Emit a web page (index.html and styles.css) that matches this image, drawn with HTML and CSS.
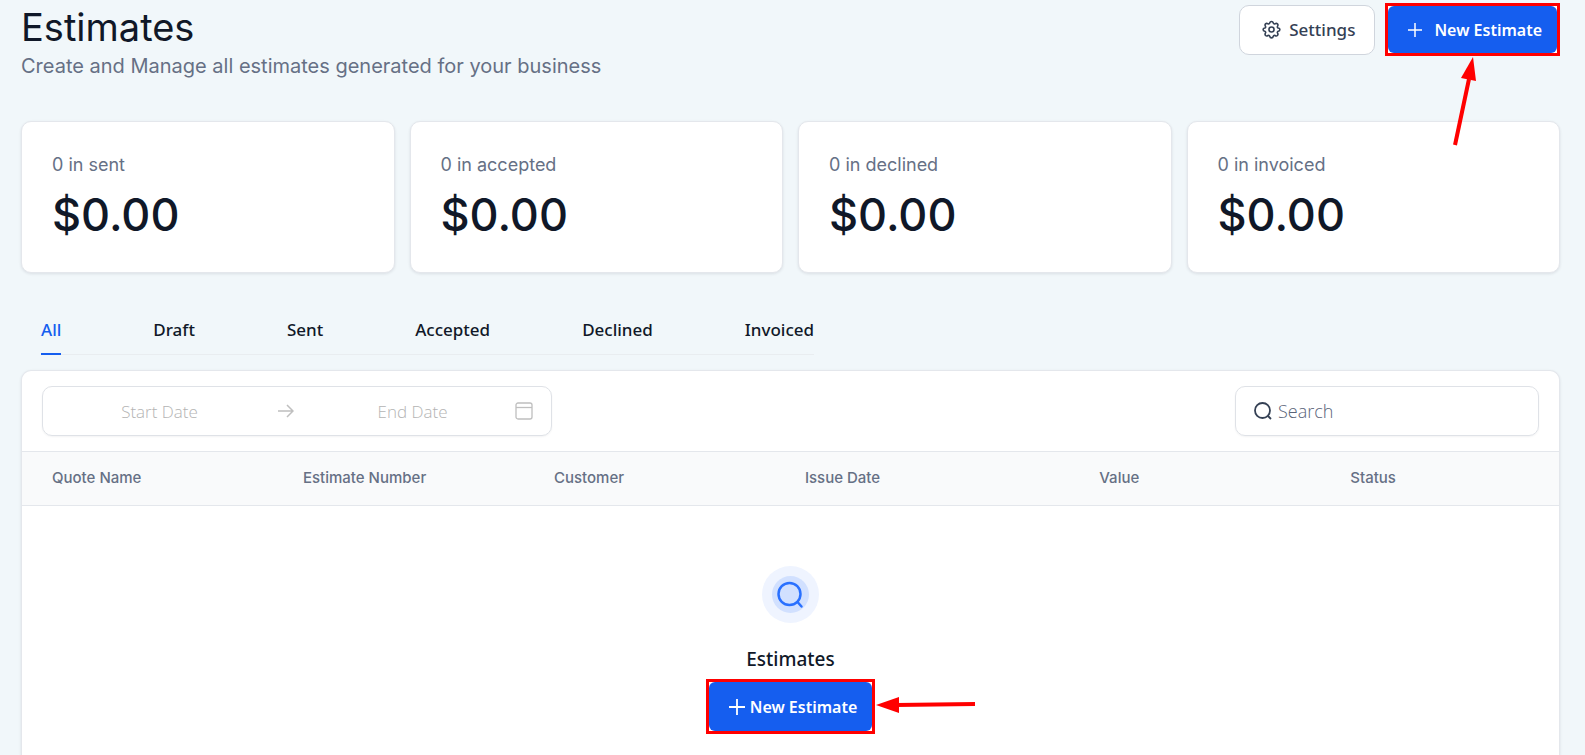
FILE: index.html
```html
<!DOCTYPE html>
<html lang="en">
<head>
	<meta charset="UTF-8">
	<meta name="viewport" content="width=device-width, initial-scale=1">
	<title>Estimates</title>
	<link rel="stylesheet" href="styles.css">
</head>
<body>
	<div class="page">
		<header class="header">
			<div>
				<h1 class="title">Estimates</h1>
				<p class="subtitle">Create and Manage all estimates generated for your business</p>
			</div>
			<div class="actions">
				<button type="button" class="btn btn-settings">
					<svg class="icon-gear" viewBox="0 0 24 24"><circle cx="12" cy="12" r="3.2"/><path d="M12 1.8c1.3 0 2 .9 2.3 2.1.3 1 1.2 1.4 2.1.9 1.1-.7 2.2-.8 3.1.1s.8 2 .1 3.1c-.5.9-.1 1.800.9 2.100 1.200.3 2.100 1 2.100 1.900 0 1.300-.9 2-2.100 2.300-1 .3-1.400 1.200-.9 2.100.7 1.100.8 2.200-.1 3.100s-2 .8-3.100.1c-.9-.5-1.800-.1-2.100.9-.3 1.200-1 2.100-2.300 2.100s-2-.9-2.300-2.100c-.3-1-1.200-1.400-2.100-.9-1.100.7-2.200.8-3.100-.1s-.8-2-.1-3.100c.5-.9.1-1.800-.9-2.100-1.200-.3-2.100-1-2.100-2.300s.9-1.600 2.100-1.900c1-.3 1.400-1.200.9-2.100-.7-1.100-.8-2.200.1-3.100s2-.8 3.100-.1c.9.5 1.800.1 2.100-.9.3-1.200 1-2.100 2.300-2.100z"/></svg>
					Settings
				</button>
				<div class="callout">
					<button type="button" class="btn btn-primary btn-top">
						<svg class="icon-plus-sm" viewBox="0 0 14 14"><path d="M7 0v14M0 7h14"/></svg>
						New Estimate
					</button>
					<svg class="arrow arrow-up" viewBox="0 0 24 90"><path class="arrow-line" d="M3 88L17 22"/><path class="arrow-head" d="M21 0L24 24L9 21z"/></svg>
				</div>
			</div>
		</header>

		<section class="cards">
			<div class="card"><p class="card-label">0 in sent</p><p class="card-value">$0.00</p></div>
			<div class="card"><p class="card-label">0 in accepted</p><p class="card-value">$0.00</p></div>
			<div class="card"><p class="card-label">0 in declined</p><p class="card-value">$0.00</p></div>
			<div class="card"><p class="card-label">0 in invoiced</p><p class="card-value">$0.00</p></div>
		</section>

		<nav class="tabs">
			<a href="#all" class="tab active">All</a>
			<a href="#draft" class="tab">Draft</a>
			<a href="#sent" class="tab">Sent</a>
			<a href="#accepted" class="tab">Accepted</a>
			<a href="#declined" class="tab">Declined</a>
			<a href="#invoiced" class="tab">Invoiced</a>
		</nav>

		<section class="panel">
			<div class="filters">
				<div class="date-range">
					<input type="text" placeholder="Start Date" aria-label="Start Date">
					<svg class="icon-range" viewBox="0 0 16 14"><path d="M0 7h15M9 1l6 6-6 6"/></svg>
					<input type="text" placeholder="End Date" aria-label="End Date">
					<svg class="icon-calendar" viewBox="0 0 18 18"><rect x="1" y="1" width="16" height="16" rx="2"/><path d="M1 5.500h16"/></svg>
				</div>
				<label class="search">
					<svg class="icon-search" viewBox="0 0 18 18"><circle cx="8.500" cy="8.500" r="7.500"/><path d="M14 14l3 3"/></svg>
					<input type="text" placeholder="Search" aria-label="Search">
				</label>
			</div>
			<table class="table">
				<thead>
					<tr>
						<th>Quote Name</th>
						<th>Estimate Number</th>
						<th>Customer</th>
						<th class="wide">Issue Date</th>
						<th>Value</th>
						<th class="last">Status</th>
					</tr>
				</thead>
			</table>
			<div class="empty">
				<div class="empty-icon">
					<svg viewBox="0 0 57 57"><circle class="halo" cx="28.500" cy="28.500" r="28.500"/><circle class="disc" cx="28.500" cy="28.500" r="18.500"/><circle class="lens" cx="27.500" cy="28" r="11"/><path class="lens" d="M35.500 36l4 4.500"/></svg>
				</div>
				<h2 class="empty-title">Estimates</h2>
				<div class="callout">
					<button type="button" class="btn btn-primary btn-empty">
						<svg class="icon-plus" viewBox="0 0 16 16"><path d="M8 0v16M0 8h16"/></svg>
						New Estimate
					</button>
					<svg class="arrow arrow-left" viewBox="0 0 100 16"><path class="arrow-line" d="M20 8L99 7"/><path class="arrow-head" d="M0 8L23 0v16z"/></svg>
				</div>
			</div>
		</section>
	</div>
</body>
</html>
```

FILE: styles.css
```css
* {
	box-sizing: border-box;
}
body {
	margin: 0;
	background: #f1f7fa;
	color: #101828;
	font-family: Inter, sans-serif;
}
h1, h2, p {
	margin: 0;
	font-weight: 400;
}
svg {
	display: block;
	flex: none;
	fill: none;
	stroke: currentColor;
}
button {
	font-family: "Noto Sans", sans-serif;
}
input {
	font-family: "Open Sans", sans-serif;
}
.page {
	display: flex;
	flex-direction: column;
	min-height: 100vh;
	padding: 3px 25px 0 21px;
}

/* header */
.header {
	display: flex;
	justify-content: space-between;
	align-items: flex-start;
}
.title {
	font-size: 38px;
	line-height: 48px;
}
.subtitle {
	font-size: 20px;
	line-height: 30px;
	color: #667085;
}
.actions {
	display: flex;
	align-items: center;
	gap: 10px;
}
.btn {
	display: flex;
	align-items: center;
	height: 50px;
	border-radius: 10px;
	font-size: 17px;
	white-space: nowrap;
}
.btn-settings {
	gap: 8px;
	padding: 0 19px 0 22px;
	border: 1px solid #d0d5dd;
	background: #fff;
	color: #344054;
	font-weight: 500;
}
.btn-primary {
	border: 0;
	border-radius: 6px;
	background: #155eef;
	color: #fff;
	font-size: 16px;
	font-weight: 600;
}
.btn-top {
	gap: 12px;
	height: 47px;
	padding: 0 15px 0 20px;
}
.btn-empty {
	gap: 5px;
	height: 49px;
	padding: 0 15px 0 20px;
}
.icon-gear {
	width: 19px;
	height: 19px;
	stroke-width: 2;
}
.icon-plus-sm {
	width: 14px;
	height: 14px;
	stroke-width: 1.5;
}
.icon-plus {
	width: 16px;
	height: 16px;
	stroke-width: 1.8;
}

/* red frame with its arrow */
.callout {
	position: relative;
	border: 3px solid #f00;
	background: #fff;
}
.arrow {
	position: absolute;
	overflow: visible;
}
.arrow-line {
	stroke: #f00;
	stroke-width: 4;
}
.arrow-head {
	fill: #f00;
	stroke: none;
}
.arrow-up {
	top: 51px;
	right: 81px;
	width: 24px;
	height: 90px;
}
.arrow-left {
	top: 15px;
	left: 100%;
	margin-left: 4px;
	width: 100px;
	height: 16px;
}

/* totals */
.cards {
	display: grid;
	grid-template-columns: repeat(4, 1fr);
	gap: 15px;
	margin-top: 40px;
}
.card {
	padding: 30px;
	border: 1px solid #e4e7ec;
	border-radius: 10px;
	background: #fff;
	box-shadow: 0 1px 3px rgba(16, 24, 40, .1);
}
.card-label {
	font-size: 18px;
	line-height: 26px;
	color: #667085;
}
.card-value {
	margin-top: 9px;
	font-size: 45px;
	line-height: 55px;
	font-weight: 500;
}

/* tabs */
.tabs {
	display: flex;
	align-self: flex-start;
	gap: 92px;
	margin: 40px 0 15px 20px;
	border-bottom: 1px solid #e9edf0;
}
.tab {
	margin-bottom: -1px;
	padding: 4px 0 11px;
	border-bottom: 2px solid transparent;
	font-family: "Noto Sans", sans-serif;
	font-size: 17px;
	line-height: 25px;
	font-weight: 500;
	color: #101828;
	text-decoration: none;
}
.active {
	border-color: #155eef;
	color: #155eef;
}

/* list */
.panel {
	flex: 1;
	border: 1px solid #e4e7ec;
	border-bottom: 0;
	border-radius: 10px 10px 0 0;
	background: #fff;
	box-shadow: 0 1px 3px rgba(16, 24, 40, .1);
}
.filters {
	display: flex;
	justify-content: space-between;
	padding: 15px 20px;
}
.date-range, .search {
	display: flex;
	align-items: center;
	height: 50px;
	border: 1px solid #dfe2e7;
	border-radius: 10px;
	box-shadow: 0 1px 2px rgba(16, 24, 40, .05);
}
.date-range {
	width: 510px;
	padding: 0 18px 0 14px;
	color: #bfbfbf;
}
.date-range input, .search input {
	flex: 1;
	min-width: 0;
	padding: 0;
	border: 0;
	outline: 0;
	background: none;
	font-size: 18px;
	font-weight: 300;
}
.date-range input {
	font-size: 17px;
	text-align: center;
}
.date-range input::placeholder {
	color: #b4b4b4;
}
.search {
	gap: 6px;
	width: 304px;
	padding: 0 18px;
	color: #344054;
}
.search input::placeholder {
	color: #596378;
}
.icon-range {
	width: 16px;
	height: 14px;
	margin: 0 16px;
	stroke-width: 1.5;
}
.icon-calendar {
	width: 18px;
	height: 18px;
	stroke-width: 1.3;
}
.icon-search {
	width: 18px;
	height: 18px;
	stroke-width: 1.8;
}
.table {
	width: 100%;
	border-collapse: collapse;
	table-layout: fixed;
}
.table th {
	width: 16.33%;
	height: 54px;
	padding: 0 30px 2px;
	border: solid #e4e7ec;
	border-width: 1px 0;
	background: #f9fafb;
	font-size: 15px;
	font-weight: 500;
	color: #667085;
	text-align: left;
	white-space: nowrap;
}
.table .wide {
	width: 19.15%;
}
.table .last {
	width: auto;
}
.empty {
	display: flex;
	flex-direction: column;
	align-items: center;
	padding: 60px 0 20px;
}
.empty-icon {
	width: 57px;
	height: 57px;
}
.halo {
	fill: #eff4ff;
	stroke: none;
}
.disc {
	fill: #d1e0ff;
	stroke: none;
}
.lens {
	stroke: #2970ff;
	stroke-width: 2.5;
	stroke-linecap: round;
}
.empty-title {
	margin: 21px 0 5px;
	font-family: "Noto Sans", sans-serif;
	font-size: 19px;
	line-height: 30px;
	font-weight: 500;
}
```
